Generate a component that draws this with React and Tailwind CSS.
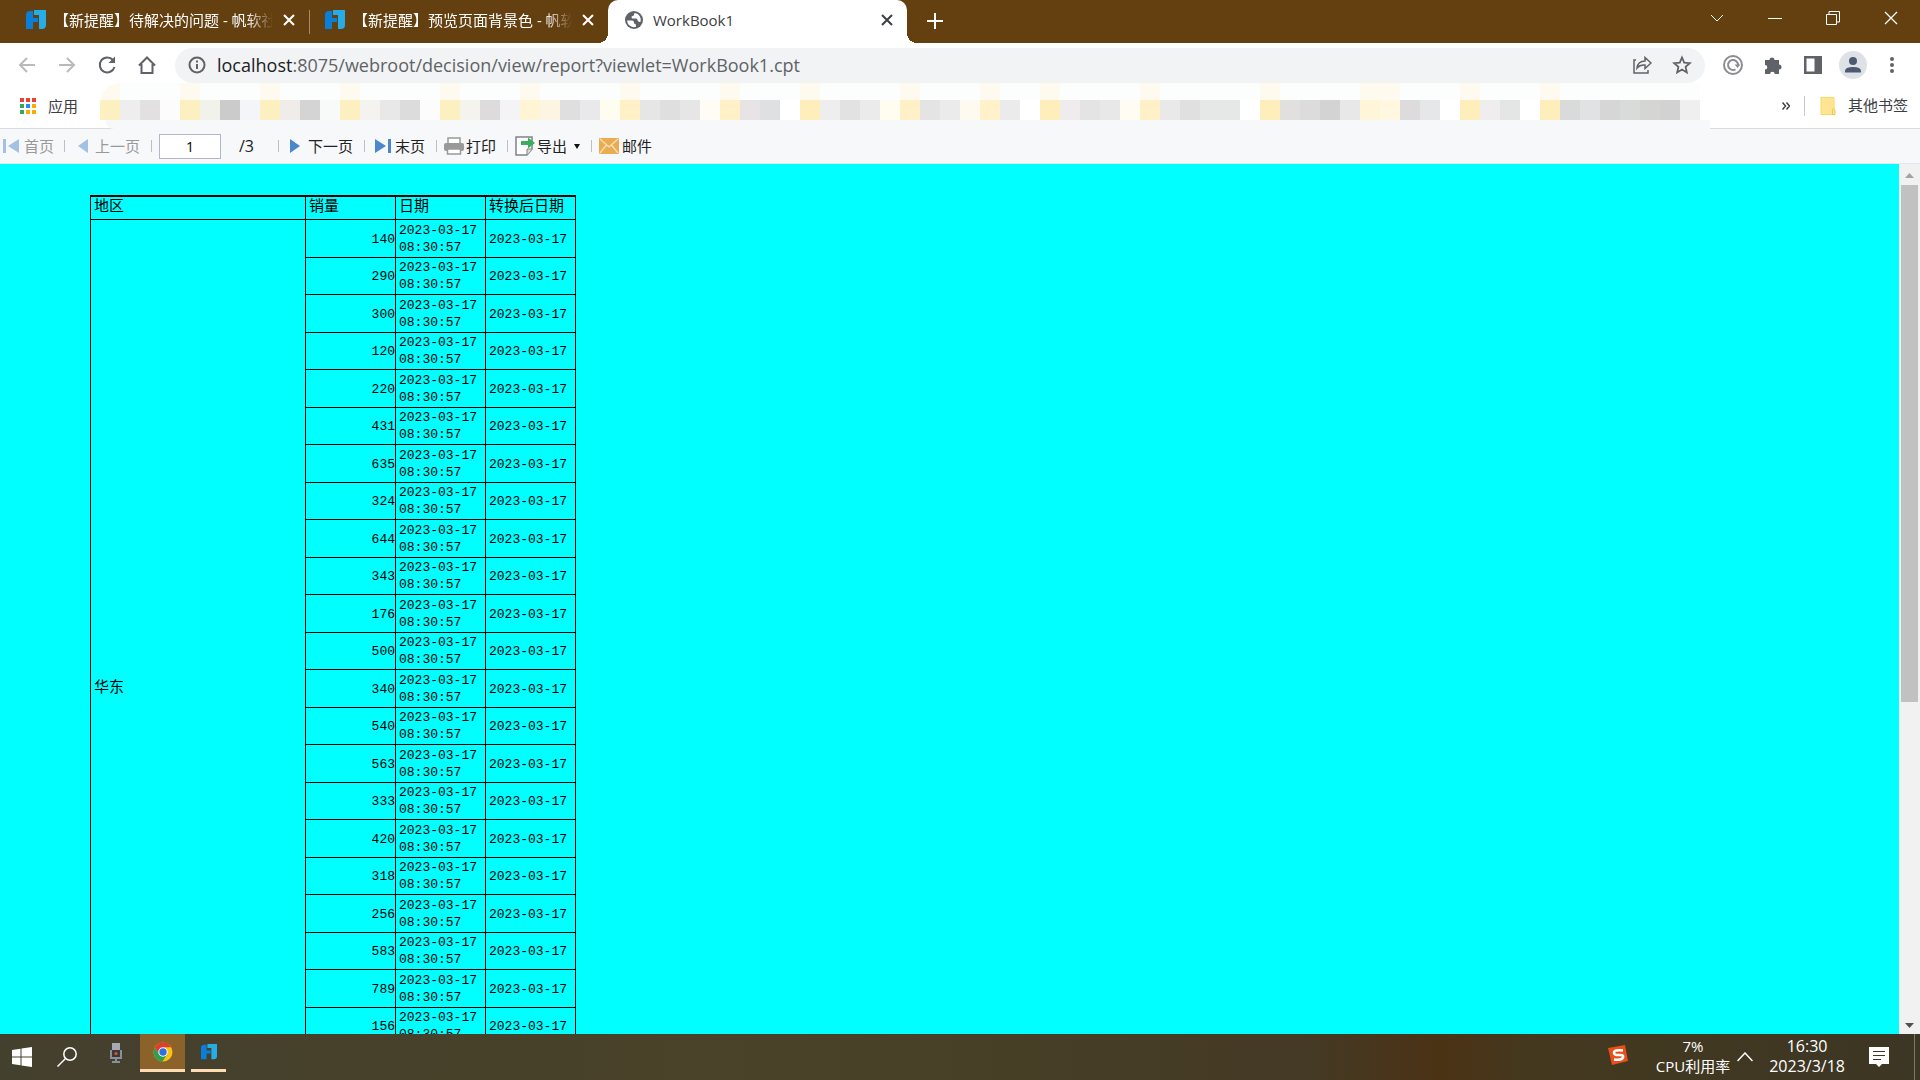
import React from 'react';
import { clsx } from 'clsx';

const UI_FONT = "font-['Open_Sans','Noto_Sans_CJK_SC',sans-serif]";
const REPORT_FONT = "font-['Liberation_Mono','Noto_Sans_CJK_SC',monospace]";

const SALES = [
  140, 290, 300, 120, 220, 431, 635, 324, 644, 343, 176,
  500, 340, 540, 563, 333, 420, 318, 256, 583, 789, 156,
];

// Censored bookmark strip, one colour for each 20px block
const MOSAIC = [
  '#fdf0c0', '#eeeeee', '#e2e0e1', '#fcfcfc', '#fdf0c0', '#f2f2ec', '#cbcbcb', '#f4f5f8',
  '#fdf0c0', '#f0ece9', '#d4d4d4', '#f8faf9', '#fdf0c0', '#f4f3ef', '#e8e8e8', '#dcdcdc',
  '#fcfcfc', '#fdf0c0', '#f4f3ee', '#dedbdc', '#f4f4f6', '#fff5d5', '#fcf5e2', '#dfdfdf',
  '#e9e8ea', '#fffdf0', '#fff0c8', '#e6e6e6', '#dfdfdf', '#e6e6e6', '#fffcf5', '#fff0c8',
  '#e8e4e5', '#dfe0e2', '#ffffff', '#fdeebc', '#eeeeee', '#e2e2e2', '#ebebeb', '#fffdf0',
  '#fff0c8', '#e4e4e4', '#ebebeb', '#fffaf0', '#fff2cb', '#ebebeb', '#ffffff', '#fdeebc',
  '#f0ecee', '#e4e4e4', '#e8e8e8', '#fffcf3', '#fff0c8', '#e9e9e9', '#e0e0e0', '#e5e8e7',
  '#e5e8e7', '#ffffff', '#fdeebc', '#e2e0de', '#dcdcdc', '#d3d3d3', '#e7e8e7', '#fff5d8',
  '#fff7df', '#dedbdc', '#e6e7e8', '#ffffff', '#fdeebc', '#f0edee', '#e4e6e5', '#ffffff',
  '#fdeebc', '#dadada', '#e1e2e4', '#d6d6d6', '#d9dada', '#d5d5d4', '#d2d2d3', '#efefef',
];

const YELLOWS = ['#fdf0c0', '#fff0c8', '#fdeebc', '#fff2cb', '#fff5d5', '#fff5d8', '#fff7df'];

function FineLogo({ className }) {
  return (
    <svg viewBox="0 0 20 20" className={className} aria-hidden="true">
      <path d="M0 5q0-4 4-4h3v7h5v4H7v7H0z" fill="#0a7fd9" />
      <path d="M8 0h12v15q0 4-4 4h-3V5H8z" fill="#26ade8" />
    </svg>
  );
}

function GlobeIcon() {
  return (
    <svg viewBox="0 0 20 20" className="size-5 shrink-0" aria-hidden="true">
      <circle cx="10" cy="10" r="9" fill="#5f6368" />
      <path d="M3 10.500h5q2 0 2 2v1q2 0 2 2v1.300A7 7 0 0 1 3 10.500z" fill="#fff" />
      <path d="M11 3q-1 0-1 1.500T8.500 6 8 8.500h4q1.500 0 1.500 1.500t2 2h1A7 7 0 0 0 11 3z" fill="#fff" />
    </svg>
  );
}

function CloseIcon() {
  return (
    <svg viewBox="0 0 12 12" className="size-3" stroke="currentColor" strokeWidth="2" aria-hidden="true">
      <path d="M1 1l10 10M11 1L1 11" />
    </svg>
  );
}

function Tab({ title, active }) {
  return (
    <div
      className={clsx(
        'relative flex h-[43px] w-[299px] shrink-0 items-center pl-4 pr-3 pb-1',
        active ? 'rounded-t-[10px] bg-white text-[#3c4043]' : 'text-white',
      )}
    >
      {active ? <GlobeIcon /> : <FineLogo className="size-5 shrink-0" />}
      <span
        className={clsx(
          'ml-2 min-w-0 flex-1 overflow-hidden whitespace-nowrap text-[15px] leading-5',
          active ? 'pl-px' : '[mask-image:linear-gradient(to_right,black_88%,transparent)]',
        )}
      >
        {title}
      </span>
      <button type="button" aria-label="关闭标签页" className="ml-2 flex size-4 items-center justify-center">
        <CloseIcon />
      </button>
      {active && (
        <>
          <span className="absolute -left-[10px] bottom-0 size-[10px] bg-[radial-gradient(circle_at_0_0,#643f10_10px,white_10px)]" />
          <span className="absolute -right-[10px] bottom-0 size-[10px] bg-[radial-gradient(circle_at_100%_0,#643f10_10px,white_10px)]" />
        </>
      )}
    </div>
  );
}

function WindowButton({ label, children }) {
  return (
    <button type="button" aria-label={label} className="flex h-9 w-[58px] items-center justify-center">
      <svg viewBox="0 0 14 14" className="size-[14px]" fill="none" stroke="white" aria-hidden="true">
        {children}
      </svg>
    </button>
  );
}

function TabStrip() {
  return (
    <header className="flex h-[43px] shrink-0 bg-[#643f10] pl-[10px]">
      <Tab title="【新提醒】待解决的问题 - 帆软社区" />
      <span className="mt-[10px] -mr-px h-6 w-px bg-[#a58b6b]" />
      <Tab title="【新提醒】预览页面背景色 - 帆软社区" />
      <Tab title="WorkBook1" active />
      <button type="button" aria-label="新标签页" className="ml-5 flex h-[42px] w-4 items-center justify-center">
        <svg viewBox="0 0 16 16" className="size-4" stroke="white" strokeWidth="2" aria-hidden="true">
          <path d="M8 0v16M0 8h16" />
        </svg>
      </button>
      <div className="ml-auto flex">
        <WindowButton label="搜索标签页"><path d="M1 4l6 6 6-6" /></WindowButton>
        <WindowButton label="最小化"><path d="M0 7.500h14" /></WindowButton>
        <WindowButton label="还原"><path d="M.5 3.500h10v10H.5zM3 3V.5h10.500V11H11" /></WindowButton>
        <WindowButton label="关闭"><path d="M1 1l12 12M13 1L1 13" strokeWidth="1.300" /></WindowButton>
      </div>
    </header>
  );
}

function ToolButton({ label, className, children }) {
  return (
    <button type="button" aria-label={label} className={clsx('flex h-9 w-10 shrink-0 items-center justify-center', className)}>
      <svg viewBox="0 0 20 20" className="size-5" fill="none" stroke="currentColor" strokeWidth="2" aria-hidden="true">
        {children}
      </svg>
    </button>
  );
}

function AddressBar() {
  return (
    <div className="flex h-10 shrink-0 items-center bg-white px-[7px] pt-1 text-[#5f6368]">
      <ToolButton label="后退" className="text-[#bababa]"><path d="M18 10H3M10 3l-7 7 7 7" /></ToolButton>
      <ToolButton label="前进" className="text-[#bababa]"><path d="M2 10h15M10 3l7 7-7 7" /></ToolButton>
      <ToolButton label="重新加载">
        <path d="M16 5a7.500 7.500 0 1 0 1.500 7" />
        <path d="M18 1.500V8h-6.500z" fill="currentColor" stroke="none" />
      </ToolButton>
      <ToolButton label="主页"><path d="M2 10.500L10 2.500l8 8M4.500 9v9h11V9" /></ToolButton>
      <div className="ml-2 flex h-[35px] flex-1 items-center rounded-full bg-[#f1f3f4] pl-3">
        <svg viewBox="0 0 20 20" className="size-5 shrink-0" fill="none" stroke="currentColor" strokeWidth="2" aria-hidden="true">
          <circle cx="10" cy="10" r="7.500" />
          <path d="M10 9v5M10 5.500v2" />
        </svg>
        <div className="ml-[10px] flex-1 whitespace-nowrap text-[18px] leading-6">
          <span className="text-[#202124]">localhost</span>:8075/webroot/decision/view/report?viewlet=WorkBook1.cpt
        </div>
        <ToolButton label="分享">
          <path d="M4 5H2v13h14v-3" strokeWidth="1.500" />
          <path d="M5 13q1-7 8-7V2.500l6 5.500-6 5.500V10q-5-.5-8 3z" strokeWidth="1.500" />
        </ToolButton>
        <ToolButton label="收藏" className="mr-[3px]">
          <path d="M10 2.500l2.200 5.200 5.600.5-4.200 3.700 1.200 5.500-4.800-2.900-4.800 2.900 1.200-5.500-4.200-3.700 5.600-.5z" strokeWidth="1.800" />
        </ToolButton>
      </div>
      <ToolButton label="扩展" className="ml-2 text-[#8b8d90]">
        <circle cx="10" cy="10" r="9" />
        <path d="M12.500 14.300A5 5 0 1 1 15 10v1" />
        <path d="M11.500 9.500h6L14.500 13z" fill="currentColor" stroke="none" />
      </ToolButton>
      <ToolButton label="扩展程序">
        <path
          d="M2 5h4.500a2.500 2.500 0 1 1 5 0H16v4.500a2.500 2.500 0 1 1 0 5V19h-4.300a2.300 2.300 0 0 0-4.600 0H2v-4.500a2.300 2.300 0 0 0 0-4.600z"
          fill="currentColor"
          stroke="none"
        />
      </ToolButton>
      <ToolButton label="侧边栏">
        <path d="M1 1h18v18H1zM3.500 3.500v13h8v-13z" fill="currentColor" fillRule="evenodd" stroke="none" />
      </ToolButton>
      <button type="button" aria-label="个人资料" className="mx-[6px] size-7 shrink-0 rounded-full bg-[#dee1e6]">
        <svg viewBox="0 0 28 28" className="size-7" fill="#4e5a70" aria-hidden="true">
          <circle cx="14" cy="10" r="4" />
          <path d="M6 21.500v-1.500q0-4 8-4t8 4v1.500z" />
        </svg>
      </button>
      <ToolButton label="菜单">
        <g fill="currentColor" stroke="none">
          <circle cx="9" cy="4" r="2" />
          <circle cx="9" cy="10" r="2" />
          <circle cx="9" cy="16" r="2" />
        </g>
      </ToolButton>
    </div>
  );
}

const APP_DOTS = [
  '#ea4335', '#ea4335', '#ea4335',
  '#34a853', '#2a88f5', '#fbab05',
  '#34a853', '#fbab05', '#fbab05',
];

function BookmarkBar() {
  return (
    <div className="relative flex h-[46px] shrink-0 border-b border-[#dadce0] bg-white text-[15px] text-[#3c4043]">
      <button type="button" className="flex h-[46px] w-[100px] shrink-0 items-center pl-5">
        <span className="grid grid-cols-3 gap-[2px]">
          {APP_DOTS.map((color, i) => (
            <span key={i} className="size-1" style={{ backgroundColor: color }} />
          ))}
        </span>
        <span className="ml-3">应用</span>
      </button>
      <div className="flex h-[37px] w-0 max-w-[1600px] flex-1 overflow-hidden rounded-tl-[20px]">
        {MOSAIC.map((color, i) => (
          <span key={i} className="flex w-5 shrink-0 flex-col">
            <span className={clsx('h-[17px]', YELLOWS.includes(color) ? 'bg-[#fefaf0]' : 'bg-[#fcfefd]')} />
            <span className="h-5" style={{ backgroundColor: color }} />
          </span>
        ))}
      </div>
      <div className="absolute right-[210px] top-[37px] left-[106px] h-[9px] rounded-bl-lg bg-[#f7f8fa]" />
      <div className="ml-auto flex shrink-0 items-center pr-3">
        <button type="button" aria-label="更多书签" className="mr-[14px]">
          <svg viewBox="0 0 8 8" className="size-2" fill="none" stroke="#3c4043" strokeWidth="1.500" aria-hidden="true">
            <path d="M.5 .5L3.500 4l-3 3.500M4.500 .5L7.500 4l-3 3.500" />
          </svg>
        </button>
        <span className="h-5 w-px bg-[#c8cacd]" />
        <button type="button" className="ml-[15px] flex items-center">
          <svg viewBox="0 0 16 18" className="h-[18px] w-4" aria-hidden="true">
            <path d="M1 .5h13v17H1z" fill="#ffe591" stroke="#f8d866" />
            <path d="M12.500 17.500v-5q0-1 1-1t1.500 2v4z" fill="#ffe591" stroke="#efc94b" />
          </svg>
          <span className="ml-3">其他书签</span>
        </button>
      </div>
    </div>
  );
}

function Separator() {
  return <span className="h-3 w-px shrink-0 bg-[#bcc0c4]" />;
}

function ReportToolbar() {
  return (
    <div className="flex h-[35px] shrink-0 items-center border-b border-[#e3e6ea] bg-[#f7f8fa] text-[15px] text-[#222]">
      <button type="button" disabled className="flex w-16 items-center pl-[3px] text-[#999]">
        <svg viewBox="0 0 16 16" className="mr-[5px] size-4" fill="#a3c1e4" aria-hidden="true">
          <path d="M0 1h3v14H0zM16 1v14L5 8z" />
        </svg>
        首页
      </button>
      <Separator />
      <button type="button" disabled className="flex w-[86px] items-center pl-[13px] text-[#999]">
        <svg viewBox="0 0 10 14" className="mr-[7px] h-[14px] w-[10px]" fill="#a3c1e4" aria-hidden="true">
          <path d="M10 0v14L0 7z" />
        </svg>
        上一页
      </button>
      <Separator />
      <input
        type="text"
        aria-label="页码"
        defaultValue="1"
        className="ml-[7px] mt-px h-[25px] w-[62px] border border-[#b4b6cc] bg-white text-center text-[14px] text-black"
      />
      <span className="ml-[18px] w-[39px] text-[16px]">/3</span>
      <Separator />
      <button type="button" className="flex w-[85px] items-center pl-[11px]">
        <svg viewBox="0 0 10 14" className="mr-2 h-[14px] w-[10px]" fill="#4b87ca" aria-hidden="true">
          <path d="M0 0v14l10-7z" />
        </svg>
        下一页
      </button>
      <Separator />
      <button type="button" className="flex w-[71px] items-center pl-[10px]">
        <svg viewBox="0 0 16 16" className="mr-1 size-4" fill="#4b87ca" aria-hidden="true">
          <path d="M0 1v14l11-7zM13 1h3v14h-3z" />
        </svg>
        末页
      </button>
      <Separator />
      <button type="button" className="flex w-[70px] items-center pl-[7px]">
        <svg viewBox="0 0 20 18" className="mr-[2px] h-[18px] w-5" aria-hidden="true">
          <path d="M4 6V1h12v5" fill="#fff" stroke="#999" strokeWidth="1.500" />
          <rect y="6" width="20" height="8" rx="2" fill="#999" />
          <path d="M3.500 12h13v5h-13z" fill="#fff" stroke="#999" strokeWidth="1.500" />
        </svg>
        打印
      </button>
      <Separator />
      <button type="button" className="flex w-[83px] items-center pl-[7px]">
        <svg viewBox="0 0 20 20" className="mr-[2px] size-5" aria-hidden="true">
          <path d="M1 1h16v12l-5 6H1z" fill="#fff" stroke="#808386" strokeWidth="1.500" />
          <path d="M17 13h-5v6" fill="#ddd" stroke="#808386" />
          <path d="M6 5h7V1.500l7 5.500-7 5.500V9H6z" fill="#3aae5a" />
        </svg>
        导出
        <svg viewBox="0 0 8 5" className="ml-[6px] h-[5px] w-2" fill="#111" aria-hidden="true">
          <path d="M1 0h6L4 5z" />
        </svg>
      </button>
      <Separator />
      <button type="button" className="flex items-center pl-[7px]">
        <svg viewBox="0 0 20 16" className="mr-[3px] h-4 w-5" aria-hidden="true">
          <rect width="20" height="16" rx="1" fill="#e9ac52" />
          <path d="M1 1l9 8 9-8M1 15l6.500-8M19 15l-6.500-8" fill="none" stroke="#fbe0b4" strokeWidth="1.300" />
        </svg>
        邮件
      </button>
    </div>
  );
}

const headCell = 'border border-black pl-[3px] pt-px text-left align-middle font-normal text-[15px] leading-5';

function ReportTable() {
  return (
    <table className={clsx('ml-[90px] mt-[31px] w-[486px] table-fixed border-collapse text-[13px] text-black', REPORT_FONT)}>
      <colgroup>
        <col className="w-[215px]" />
        <col className="w-[90px]" />
        <col className="w-[90px]" />
        <col className="w-[90px]" />
      </colgroup>
      <thead>
        <tr className="h-[23px] border-t-2 border-black">
          <th className={headCell}>地区</th>
          <th className={headCell}>销量</th>
          <th className={headCell}>日期</th>
          <th className={headCell}>转换后日期</th>
        </tr>
      </thead>
      <tbody>
        {SALES.map((value, i) => (
          <tr key={i} className={i % 2 ? 'h-[37px]' : 'h-[38px]'}>
            {i === 0 && (
              <td rowSpan={SALES.length + 1} className="border border-black pl-[3px] pt-1 align-middle text-[15px]">
                华东
              </td>
            )}
            <td className="border border-black pt-[3px] text-right">{value}</td>
            <td className="border border-black pl-[3px] pt-px leading-[17px]">2023-03-17 08:30:57</td>
            <td className="border border-black pl-[3px] pt-[3px]">2023-03-17</td>
          </tr>
        ))}
        <tr className="h-[112px]">
          <td className="border border-black" />
          <td className="border border-black" />
          <td className="border border-black" />
        </tr>
      </tbody>
    </table>
  );
}

function ScrollBar() {
  return (
    <div className="flex w-[21px] shrink-0 flex-col items-center bg-[#f1f1f1]">
      <svg viewBox="0 0 9 5" className="mt-[9px] mb-[7px] h-[5px] w-[9px] shrink-0" fill="#a3a3a3" aria-hidden="true">
        <path d="M0 5l4.500-5L9 5z" />
      </svg>
      <div className="h-[517px] w-[17px] bg-[#c1c1c1]" />
      <svg viewBox="0 0 9 5" className="mt-auto mb-[6px] h-[5px] w-[9px] shrink-0" fill="#505050" aria-hidden="true">
        <path d="M0 0l4.500 5L9 0z" />
      </svg>
    </div>
  );
}

function ChromeLogo() {
  return (
    <svg viewBox="0 0 20 20" className="size-5" aria-hidden="true">
      <circle cx="10" cy="10" r="9.500" fill="#fbc116" />
      <path d="M1.800 5.200A9.500 9.500 0 0 1 18.200 5.300H10L6 12.500z" fill="#e33b2e" />
      <path d="M1.800 5.200A9.500 9.500 0 0 0 9.500 19.500L14 12.500l-8 0z" fill="#2da04e" />
      <circle cx="10" cy="10" r="4.700" fill="#fff" />
      <circle cx="10" cy="10" r="3.700" fill="#2f6fe0" />
    </svg>
  );
}

function Taskbar() {
  return (
    <footer className="flex h-[46px] shrink-0 bg-[linear-gradient(to_right,#44402e,#4a4228_40%,#443a25_68%,#4b3215_75%,#44391f_80%,#3c3624)] text-[15px] leading-5 text-white">
      <button type="button" aria-label="开始" className="flex w-11 items-center justify-center">
        <svg viewBox="0 0 20 20" className="size-5" fill="white" aria-hidden="true">
          <path d="M0 3l8.500-1.200v7.700H0zM9.500 1.600L20 0v9.500H9.500zM0 10.500h8.500v7.700L0 17zM9.500 10.500H20V20L9.500 18.400z" />
        </svg>
      </button>
      <button type="button" aria-label="搜索" className="flex w-[46px] items-center justify-center">
        <svg viewBox="0 0 20 20" className="size-5" fill="none" stroke="white" strokeWidth="1.500" aria-hidden="true">
          <circle cx="13" cy="7" r="6.200" />
          <path d="M8.500 11.500L.5 19.500" />
        </svg>
      </button>
      <button type="button" aria-label="录音" className="flex w-[50px] items-center justify-center pl-[2px] pb-2">
        <svg viewBox="0 0 12 20" className="h-5 w-3" aria-hidden="true">
          <path d="M2 0h8v9H2z" fill="#a6a9b1" />
          <path d="M0 7h2v7h8V7h2v9H0zM5 16h2v2h3v2H2v-2h3z" fill="#87919c" />
          <path d="M2 7h8v7H2z" fill="#3b3837" />
          <circle cx="6" cy="10.500" r="1.600" fill="#e0552b" />
        </svg>
      </button>
      <button type="button" aria-label="Chrome" className="flex h-[38px] w-[45px] items-center justify-center border-b-[3px] border-[#fddcb4] bg-[#8c622b]">
        <ChromeLogo />
      </button>
      <button type="button" aria-label="FineReport" className="ml-[6px] flex h-[38px] w-[35px] items-center justify-center border-b-[3px] border-[#fddcb4]">
        <FineLogo className="h-[18px] w-4" />
      </button>
      <div className="ml-auto flex">
        <svg viewBox="0 0 20 20" className="mt-[11px] mr-7 size-5" aria-hidden="true">
          <path d="M0 3L17 0l3 16-16 4z" fill="#e94e1b" />
          <path d="M15 5.500Q6 4.500 6 7.500t5 2.500 4 2.500-9 2" fill="none" stroke="#fff" strokeWidth="2.600" />
        </svg>
        <div className="mt-[2px] flex flex-col items-center">
          <span>7%</span>
          <span>CPU利用率</span>
        </div>
        <button type="button" aria-label="显示隐藏的图标" className="ml-[7px] mr-4 flex items-center">
          <svg viewBox="0 0 16 10" className="h-[10px] w-4" fill="none" stroke="white" strokeWidth="1.500" aria-hidden="true">
            <path d="M.5 9L8 1l7.500 8" />
          </svg>
        </button>
        <div className="mt-[2px] flex flex-col items-center text-[16px]">
          <span>16:30</span>
          <span>2023/3/18</span>
        </div>
        <button type="button" aria-label="通知" className="ml-6 mr-[25px] flex items-center">
          <svg viewBox="0 0 20 20" className="size-5" aria-hidden="true">
            <path d="M0 0h20v17h-7l-3 3-3-3H0z" fill="#fff" />
            <path d="M4 4.500h12M4 8.500h12M4 12.500h8" stroke="#3c3624" />
          </svg>
        </button>
        <span className="mr-[5px] w-px bg-[#7c7869]" />
      </div>
    </footer>
  );
}

export default function App() {
  return (
    <div className={clsx('flex h-screen flex-col overflow-hidden', UI_FONT)}>
      <TabStrip />
      <AddressBar />
      <BookmarkBar />
      <ReportToolbar />
      <main className="flex min-h-0 flex-1 bg-[#00ffff]">
        <div className="min-w-0 flex-1 overflow-hidden">
          <ReportTable />
        </div>
        <ScrollBar />
      </main>
      <Taskbar />
    </div>
  );
}
